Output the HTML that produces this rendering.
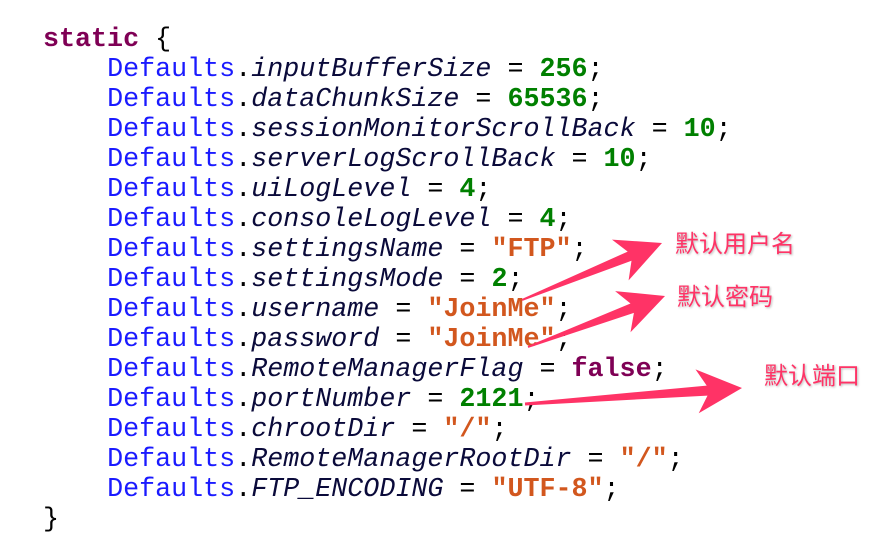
<!DOCTYPE html>
<html><head><meta charset="utf-8"><style>
body{margin:0;width:892px;height:550px;background:#fff;overflow:hidden;position:relative}
pre{position:absolute;left:43px;top:25px;margin:0;font-family:"Liberation Mono",monospace;font-size:26.7px;line-height:30px;color:#000}
.k{color:#7f0055;font-weight:bold}.d{color:#1a1aff}.f{font-style:italic;color:#0a0a3a}.n{color:#008000;font-weight:bold}.s{color:#d2571e;font-weight:bold}
.l{position:absolute;font-family:"Liberation Sans","Noto Sans CJK SC",sans-serif;font-size:24px;line-height:28px;color:#ff3366;text-shadow:1px 1px 2px #bbb,-1px -1px 0 #fff}
svg{position:absolute;left:0;top:0}
</style></head><body>
<pre><span class="k">static</span> {
    <span class="d">Defaults</span>.<span class="f">inputBufferSize</span> = <span class="n">256</span>;
    <span class="d">Defaults</span>.<span class="f">dataChunkSize</span> = <span class="n">65536</span>;
    <span class="d">Defaults</span>.<span class="f">sessionMonitorScrollBack</span> = <span class="n">10</span>;
    <span class="d">Defaults</span>.<span class="f">serverLogScrollBack</span> = <span class="n">10</span>;
    <span class="d">Defaults</span>.<span class="f">uiLogLevel</span> = <span class="n">4</span>;
    <span class="d">Defaults</span>.<span class="f">consoleLogLevel</span> = <span class="n">4</span>;
    <span class="d">Defaults</span>.<span class="f">settingsName</span> = <span class="s">"FTP"</span>;
    <span class="d">Defaults</span>.<span class="f">settingsMode</span> = <span class="n">2</span>;
    <span class="d">Defaults</span>.<span class="f">username</span> = <span class="s">"JoinMe"</span>;
    <span class="d">Defaults</span>.<span class="f">password</span> = <span class="s">"JoinMe"</span>;
    <span class="d">Defaults</span>.<span class="f">RemoteManagerFlag</span> = <span class="k">false</span>;
    <span class="d">Defaults</span>.<span class="f">portNumber</span> = <span class="n">2121</span>;
    <span class="d">Defaults</span>.<span class="f">chrootDir</span> = <span class="s">"/"</span>;
    <span class="d">Defaults</span>.<span class="f">RemoteManagerRootDir</span> = <span class="s">"/"</span>;
    <span class="d">Defaults</span>.<span class="f">FTP_ENCODING</span> = <span class="s">"UTF-8"</span>;
}</pre>
<svg width="892" height="550"><g fill="#ff3366">
<polygon points="522.4,300.9 631.5,260.8 628.6,280.4 662,243 612,239.6 627.7,251.6 521.6,299.1"/>
<polygon points="528.3,347.9 633.9,312.9 630.5,332.3 665,296 615.1,291.1 630.5,303.5 527.7,346.1"/>
<polygon points="525.1,405.5 707.5,395.6 698.7,413.2 742,388 695.5,369.4 706.7,385.6 524.9,402.5"/>
</g></svg>
<div class="l" style="left:675px;top:231px">默认用户名</div>
<div class="l" style="left:677px;top:284px">默认密码</div>
<div class="l" style="left:764px;top:363px">默认端口</div>
</body></html>
